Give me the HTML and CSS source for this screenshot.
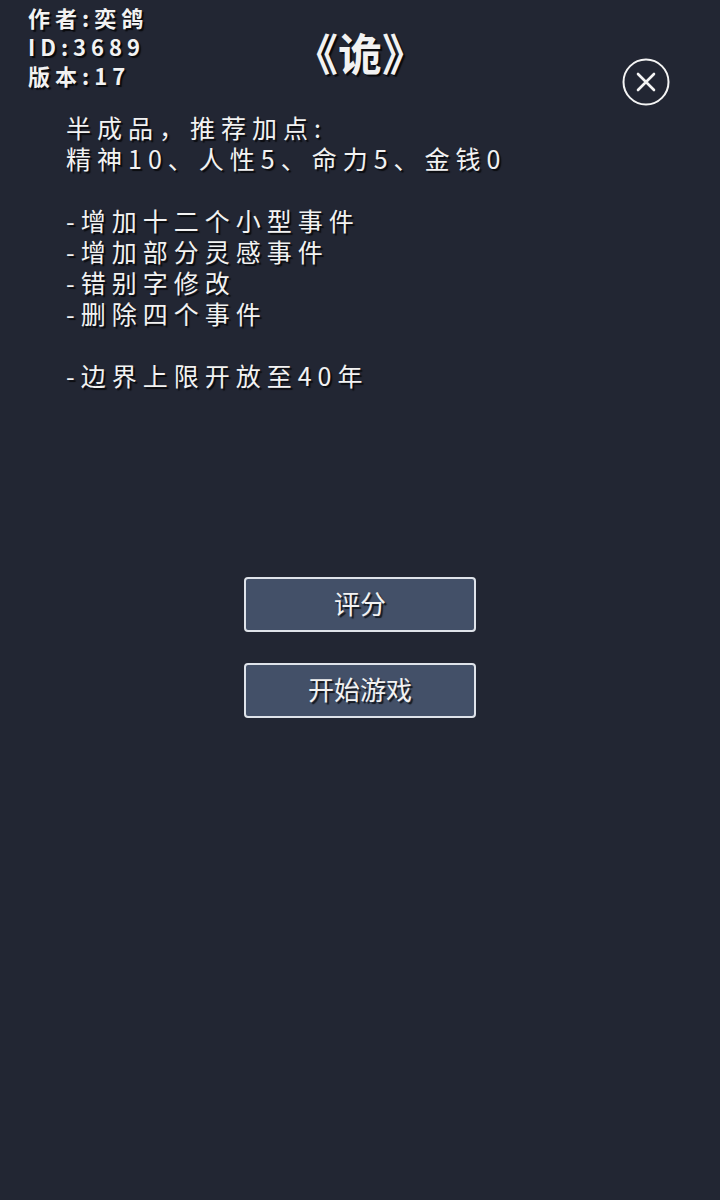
FILE: index.html
```html
<!DOCTYPE html>
<html lang="zh">
<head>
<meta charset="utf-8">
<title>诡</title>
<link rel="stylesheet" href="styles.css">
</head>
<body>
<div class="page">
  <header class="top">
    <div class="info">
      <div class="info-line">作者:奕鸽</div>
      <div class="info-line">ID:3689</div>
      <div class="info-line">版本:17</div>
    </div>
    <h1 class="title">《诡》</h1>
    <div class="close-wrap">
      <button class="close" aria-label="关闭">
        <svg width="48" height="48" viewBox="0 0 48 48">
          <circle cx="24" cy="24" r="22.5" fill="none" stroke="#f4f4f4" stroke-width="2"/>
          <path d="M16 16 L32 32 M32 16 L16 32" stroke="#f4f4f4" stroke-width="2.6" stroke-linecap="round"/>
        </svg>
      </button>
    </div>
  </header>
  <section class="desc">
    <p>半成品，推荐加点:</p>
    <p>精神10、人性5、命力5、金钱0</p>
    <p class="blank"></p>
    <p>-增加十二个小型事件</p>
    <p>-增加部分灵感事件</p>
    <p>-错别字修改</p>
    <p>-删除四个事件</p>
    <p class="blank"></p>
    <p>-边界上限开放至40年</p>
  </section>
  <div class="actions">
    <button class="btn">评分</button>
    <button class="btn">开始游戏</button>
  </div>
</div>
</body>
</html>
```
FILE: styles.css
```css
html, body {
  margin: 0;
  padding: 0;
  background: #222633;
}
body {
  width: 720px;
  height: 1200px;
  font-family: "Noto Sans CJK SC", "Noto Sans", sans-serif;
  color: #f2f2f2;
  overflow: hidden;
}
.page {
  display: flex;
  flex-direction: column;
}
.top {
  display: grid;
  grid-template-columns: 1fr auto 1fr;
  height: 106px;
}
.info {
  padding-left: 28px;
  padding-top: 3px;
}
.info-line {
  font-size: 22px;
  font-weight: bold;
  line-height: 29px;
  letter-spacing: 5px;
  text-shadow: 2px 2px 1px rgba(0,0,0,0.75);
}
.title {
  margin: 0;
  padding-top: 20px;
  font-size: 44px;
  font-weight: bold;
  line-height: 64px;
  letter-spacing: 0;
  text-shadow: 2px 2px 1px rgba(0,0,0,0.75);
}
.close-wrap {
  display: flex;
  justify-content: flex-end;
  padding-right: 50px;
  padding-top: 58px;
}
.close {
  width: 48px;
  height: 48px;
  padding: 0;
  border: none;
  background: none;
  display: block;
}
.close svg { display: block; }
.desc {
  padding-left: 66px;
  padding-top: 6px;
}
.desc p {
  margin: 0;
  font-size: 25px;
  line-height: 31px;
  height: 31px;
  letter-spacing: 6px;
  text-shadow: 2px 2px 1px rgba(0,0,0,0.7);
}
.actions {
  display: flex;
  flex-direction: column;
  align-items: center;
  gap: 31px;
  margin-top: 186px;
}
.btn {
  width: 232px;
  height: 55px;
  box-sizing: border-box;
  background: #435068;
  border: 2px solid #dfe3ea;
  border-radius: 4px;
  color: #f2f2f2;
  font-family: "Noto Sans CJK SC", "Noto Sans", sans-serif;
  font-size: 26px;
  line-height: 1;
  padding: 0 0 4px;
  text-shadow: 2px 2px 1px rgba(0,0,0,0.7);
}
```
